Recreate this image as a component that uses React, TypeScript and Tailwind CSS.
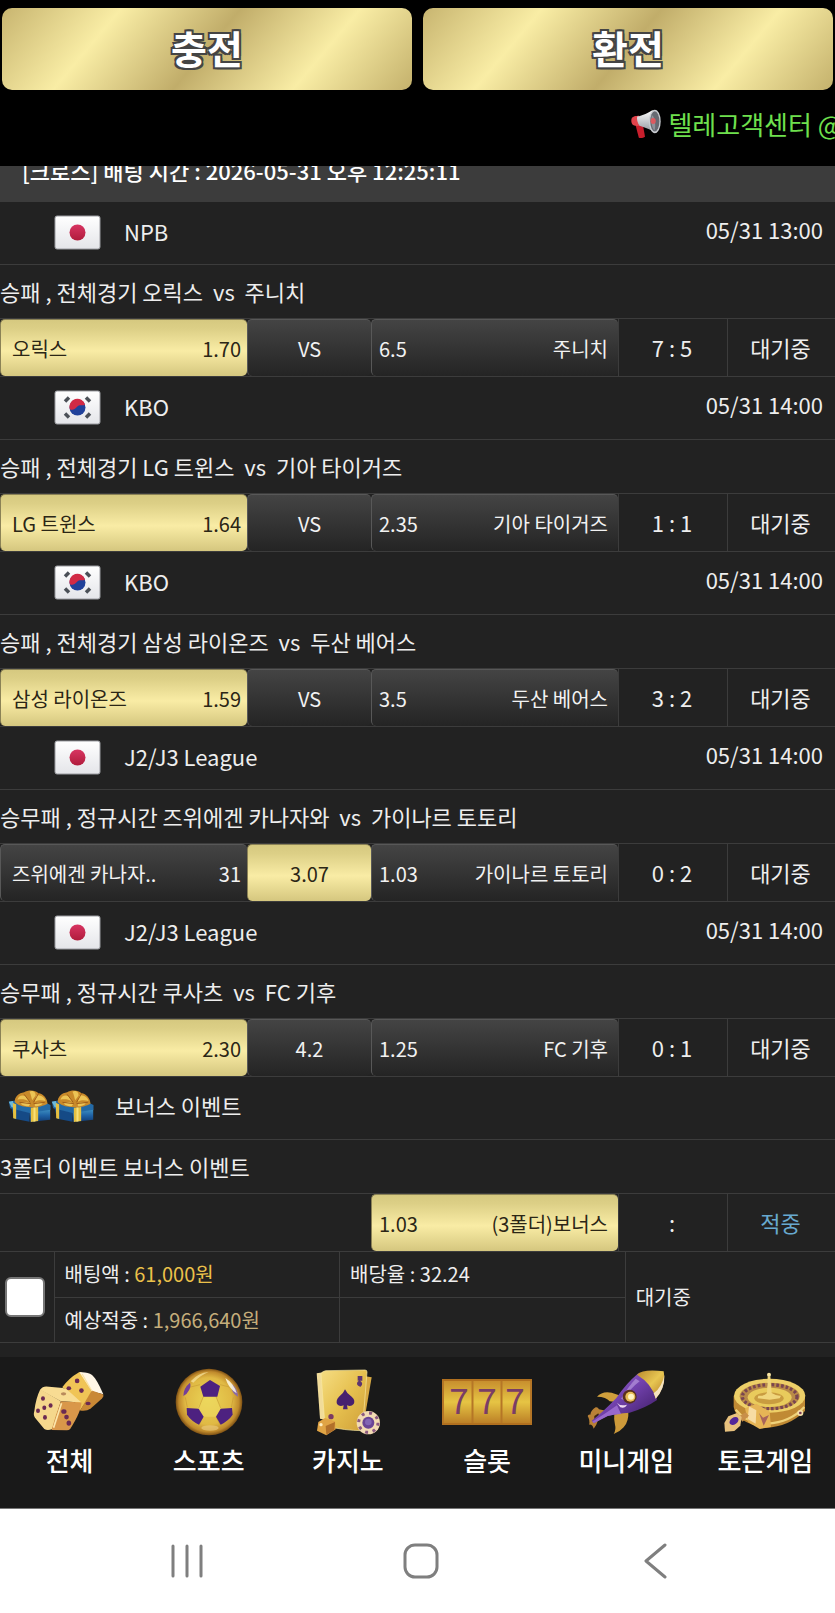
import type { ReactNode } from "react";

type Pick = "home" | "draw" | "away";

interface Match {
  country: "jp" | "kr";
  league: string;
  time: string;
  title: string;
  home: string;
  homeOdds: string;
  draw: string;
  away: string;
  awayOdds: string;
  score: string;
  pick: Pick;
}

const MATCHES: Match[] = [
  {
    country: "jp",
    league: "NPB",
    time: "05/31 13:00",
    title: "승패 , 전체경기 오릭스  vs  주니치",
    home: "오릭스",
    homeOdds: "1.70",
    draw: "VS",
    away: "주니치",
    awayOdds: "6.5",
    score: "7 : 5",
    pick: "home",
  },
  {
    country: "kr",
    league: "KBO",
    time: "05/31 14:00",
    title: "승패 , 전체경기 LG 트윈스  vs  기아 타이거즈",
    home: "LG 트윈스",
    homeOdds: "1.64",
    draw: "VS",
    away: "기아 타이거즈",
    awayOdds: "2.35",
    score: "1 : 1",
    pick: "home",
  },
  {
    country: "kr",
    league: "KBO",
    time: "05/31 14:00",
    title: "승패 , 전체경기 삼성 라이온즈  vs  두산 베어스",
    home: "삼성 라이온즈",
    homeOdds: "1.59",
    draw: "VS",
    away: "두산 베어스",
    awayOdds: "3.5",
    score: "3 : 2",
    pick: "home",
  },
  {
    country: "jp",
    league: "J2/J3 League",
    time: "05/31 14:00",
    title: "승무패 , 정규시간 즈위에겐 카나자와  vs  가이나르 토토리",
    home: "즈위에겐 카나자..",
    homeOdds: "31",
    draw: "3.07",
    away: "가이나르 토토리",
    awayOdds: "1.03",
    score: "0 : 2",
    pick: "draw",
  },
  {
    country: "jp",
    league: "J2/J3 League",
    time: "05/31 14:00",
    title: "승무패 , 정규시간 쿠사츠  vs  FC 기후",
    home: "쿠사츠",
    homeOdds: "2.30",
    draw: "4.2",
    away: "FC 기후",
    awayOdds: "1.25",
    score: "0 : 1",
    pick: "home",
  },
];

const NAV = [
  { label: "전체", icon: <DiceIcon /> },
  { label: "스포츠", icon: <BallIcon /> },
  { label: "카지노", icon: <CardsIcon /> },
  { label: "슬롯", icon: <SlotIcon /> },
  { label: "미니게임", icon: <RocketIcon /> },
  { label: "토큰게임", icon: <RouletteIcon /> },
];

export default function App() {
  return (
    <div className="w-full overflow-hidden bg-[#222222] text-[22px] leading-8 text-[#eeeeee] font-['Noto_Sans_CJK_KR','Noto_Sans',sans-serif]">
      <SvgDefs />
      <header className="bg-black pt-2">
        <div className="flex gap-[11px] px-0.5">
          <GoldButton>충전</GoldButton>
          <GoldButton>환전</GoldButton>
        </div>
        <div className="flex h-[76px] items-center gap-1.5 overflow-hidden pb-2 pl-[75.5%] text-[26px] whitespace-nowrap text-[#6fe04e]">
          <MegaphoneIcon />
          <span>텔레고객센터 @</span>
        </div>
      </header>

      <main>
        {/* slip header, partly scrolled under the top bar */}
        <div className="flex h-9 items-end overflow-hidden bg-[#3c3c3c] px-[22px] pb-4 font-medium whitespace-nowrap text-white">
          [크로스] 배팅 시간 : 2026-05-31 오후 12:25:11
        </div>

        {MATCHES.map((match, i) => (
          <MatchRow key={i} match={match} />
        ))}

        <section>
          <div className="flex h-[63px] items-center border-b border-[#3c3c3c] px-2 pb-1">
            <div className="flex">
              <GiftIcon />
              <GiftIcon />
            </div>
            <span className="ml-[21px] pb-0.5">보너스 이벤트</span>
          </div>
          <TitleRow>3폴더 이벤트 보너스 이벤트</TitleRow>
          <OddsGrid>
            <span />
            <span />
            <OddsCell active>
              <span>1.03</span>
              <span>(3폴더)보너스</span>
            </OddsCell>
            <InfoCell>:</InfoCell>
            <InfoCell>
              <span className="text-[#68a9cf]">적중</span>
            </InfoCell>
          </OddsGrid>
        </section>

        <Totals />
      </main>

      <nav className="mt-3.5 grid h-[151px] grid-cols-6 bg-[#191919] pt-[11px]">
        {NAV.map((item) => (
          <a key={item.label} href="#" className="flex flex-col items-center text-[26px] font-medium text-white">
            <span className="flex h-[68px] items-center">{item.icon}</span>
            <span className="mt-1.5 leading-9 whitespace-nowrap">{item.label}</span>
          </a>
        ))}
      </nav>

      <SystemBar />
    </div>
  );
}

function GoldButton({ children }: { children: ReactNode }) {
  return (
    <button
      type="button"
      className="h-[82px] flex-1 rounded-[10px] bg-[linear-gradient(130deg,#c8b570_0%,#f9eda5_25%,#c1ad6a_50%,#f9eda5_75%,#c4b16c_100%)] pb-1 text-[39px] font-bold text-white [text-shadow:-2px_-2px_0_#444,2px_-2px_0_#444,-2px_2px_0_#444,2px_2px_0_#444,0_2px_0_#444,0_-2px_0_#444]"
    >
      {children}
    </button>
  );
}

function MatchRow({ match }: { match: Match }) {
  return (
    <section>
      <div className="flex h-[63px] items-center border-b border-[#3c3c3c] pr-3 pb-0.5 pl-[54px]">
        <Flag country={match.country} />
        <span className="ml-[23px] flex-1 pb-0.5">{match.league}</span>
        <time className="pb-1.5">{match.time}</time>
      </div>
      <TitleRow>{match.title}</TitleRow>
      <OddsGrid>
        <OddsCell active={match.pick === "home"} home>
          <span>{match.home}</span>
          <span>{match.homeOdds}</span>
        </OddsCell>
        <OddsCell active={match.pick === "draw"} centered>
          <span>{match.draw}</span>
        </OddsCell>
        <OddsCell active={match.pick === "away"}>
          <span>{match.awayOdds}</span>
          <span>{match.away}</span>
        </OddsCell>
        <InfoCell>{match.score}</InfoCell>
        <InfoCell>대기중</InfoCell>
      </OddsGrid>
    </section>
  );
}

function TitleRow({ children }: { children: ReactNode }) {
  return (
    <div className="flex h-[54px] items-center overflow-hidden border-b border-[#3c3c3c] pb-0.5 whitespace-pre">
      {children}
    </div>
  );
}

function OddsGrid({ children }: { children: ReactNode }) {
  return (
    <div className="grid h-[58px] grid-cols-[247fr_124fr_247fr_109fr_108fr] border-b border-[#3c3c3c]">
      {children}
    </div>
  );
}

function OddsCell({
  active = false,
  home = false,
  centered = false,
  children,
}: {
  active?: boolean;
  home?: boolean;
  centered?: boolean;
  children: ReactNode;
}) {
  const tone = active
    ? "border-[#8b8256] bg-[linear-gradient(180deg,#d6c980_0%,#dccf86_15%,#f9eca5_55%,#d5c77f_100%)] text-[#2b2616]"
    : "border-[#585858] bg-[linear-gradient(180deg,#444444_0%,#242424_100%)] text-[#f2f2f2]";
  const place = centered ? "justify-center" : "justify-between";
  const pad = home ? "pl-[11px] pr-1.5" : centered ? "" : "pl-[7px] pr-2.5";

  return (
    <div
      className={`flex items-center overflow-hidden rounded-[5px] border-t border-l pt-0.5 text-[20px] whitespace-nowrap ${tone} ${place} ${pad}`}
    >
      {children}
    </div>
  );
}

function InfoCell({ children }: { children: ReactNode }) {
  return (
    <div className="flex items-center justify-center border-l border-[#3c3c3c] pr-0.5 pb-0.5 whitespace-nowrap">
      {children}
    </div>
  );
}

function Totals() {
  return (
    <table className="w-full table-fixed border-collapse text-left text-[20px] whitespace-nowrap">
      <colgroup>
        <col className="w-[54px]" />
        <col className="w-[34.2%]" />
        <col className="w-[34.2%]" />
        <col />
      </colgroup>
      <tbody>
        <tr className="h-[45px]">
          <td rowSpan={2} className="border-r border-b border-[#3c3c3c] pl-[5px]">
            <input
              type="checkbox"
              aria-label="배팅 선택"
              className="block size-10 appearance-none rounded-md border-2 border-[#767676] bg-white"
            />
          </td>
          <td className="border-r border-b border-[#3c3c3c] px-2.5">
            배팅액 : <span className="text-[#ebc14a]">61,000원</span>
          </td>
          <td className="border-r border-b border-[#3c3c3c] px-2.5">배당율 : 32.24</td>
          <td rowSpan={2} className="border-b border-[#3c3c3c] px-2.5">
            대기중
          </td>
        </tr>
        <tr className="h-[45px]">
          <td className="border-r border-b border-[#3c3c3c] px-2.5">
            예상적중 : <span className="text-[#c5ae7b]">1,966,640원</span>
          </td>
          <td className="border-r border-b border-[#3c3c3c]" />
        </tr>
      </tbody>
    </table>
  );
}

function SystemBar() {
  return (
    <div className="grid h-[106px] grid-cols-3 items-center justify-items-center border-t border-[#777] bg-white pr-[63px] pl-[70px]">
      <button type="button" aria-label="최근 앱">
        <svg width="36" height="36" viewBox="0 0 36 36" stroke="#7f7f7f" strokeWidth="3" strokeLinecap="round">
          <path d="M4 3v30M18 3v30M32 3v30" />
        </svg>
      </button>
      <button type="button" aria-label="홈">
        <svg width="36" height="36" viewBox="0 0 36 36" fill="none" stroke="#7f7f7f" strokeWidth="3">
          <rect x="2" y="2" width="32" height="32" rx="10" />
        </svg>
      </button>
      <button type="button" aria-label="뒤로">
        <svg width="36" height="36" viewBox="0 0 36 36" fill="none" stroke="#7f7f7f" strokeWidth="3" strokeLinecap="round" strokeLinejoin="round">
          <path d="M28 2 9 18l19 16" />
        </svg>
      </button>
    </div>
  );
}

function SvgDefs() {
  return (
    <svg width="0" height="0" className="absolute" aria-hidden="true">
      <defs>
        <linearGradient id="flagBg" x1="0" y1="0" x2="0" y2="1">
          <stop offset="0" stopColor="#ffffff" />
          <stop offset="1" stopColor="#e4e5e9" />
        </linearGradient>
        <linearGradient id="redDot" x1="0" y1="0" x2="0" y2="1">
          <stop offset="0" stopColor="#d83562" />
          <stop offset="1" stopColor="#b01c3c" />
        </linearGradient>
        <linearGradient id="gold" x1="0" y1="0" x2="1" y2="1">
          <stop offset="0" stopColor="#b98a2e" />
          <stop offset="0.5" stopColor="#e8c652" />
          <stop offset="1" stopColor="#b47a25" />
        </linearGradient>
        <linearGradient id="cardFace" x1="0" y1="0" x2="1" y2="1">
          <stop offset="0" stopColor="#f5dd83" />
          <stop offset="0.5" stopColor="#e6c04f" />
          <stop offset="1" stopColor="#cf9f38" />
        </linearGradient>
        <radialGradient id="ballGold" cx="0.5" cy="0.5" r="0.5" fx="0.48" fy="0.45">
          <stop offset="0" stopColor="#e9d355" />
          <stop offset="0.7" stopColor="#e0b944" />
          <stop offset="0.9" stopColor="#c08a2c" />
          <stop offset="1" stopColor="#7c4f14" />
        </radialGradient>
        <linearGradient id="reel" x1="0" y1="0" x2="0" y2="1">
          <stop offset="0" stopColor="#c58a2c" />
          <stop offset="0.5" stopColor="#e6c444" />
          <stop offset="1" stopColor="#b87a24" />
        </linearGradient>
        <linearGradient id="purple" x1="0" y1="0" x2="1" y2="1">
          <stop offset="0" stopColor="#a77bd0" />
          <stop offset="0.45" stopColor="#7443b0" />
          <stop offset="1" stopColor="#38185c" />
        </linearGradient>
        <linearGradient id="horn" x1="0" y1="0" x2="0" y2="1">
          <stop offset="0" stopColor="#ffffff" />
          <stop offset="1" stopColor="#8f959c" />
        </linearGradient>
        <linearGradient id="giftBox" x1="0" y1="0" x2="0" y2="1">
          <stop offset="0" stopColor="#3f92c2" />
          <stop offset="0.5" stopColor="#1f62a5" />
          <stop offset="1" stopColor="#103a72" />
        </linearGradient>
      </defs>
    </svg>
  );
}

function Flag({ country }: { country: "jp" | "kr" }) {
  return (
    <svg width="47" height="35" viewBox="0 0 47 35" role="img" aria-label={country === "jp" ? "일본" : "대한민국"}>
      <rect x="1" y="1" width="45" height="33" rx="2" fill="url(#flagBg)" stroke="#9a9ba0" strokeWidth="1" />
      {country === "jp" ? (
        <circle cx="23.5" cy="17.5" r="8" fill="url(#redDot)" />
      ) : (
        <g>
          <circle cx="23.5" cy="17.5" r="8" fill="#20419a" />
          <path d="M15.7 19a8 8 0 1 1 15.4-4.500c-3 2-5.500-.5-8 2.300-2.500 3.200-5.400 3.800-7.400 2.200z" fill="#d22a45" />
          <g stroke="#4b5057" strokeWidth="3.500">
            <path d="m11 11.500 4-4M32 7.500l4 4M11 23.500l4 4M32 27.500l4-4" />
          </g>
        </g>
      )}
    </svg>
  );
}

function MegaphoneIcon() {
  return (
    <svg width="32" height="32" viewBox="638 328 98 98" aria-hidden="true" className="shrink-0">
      <path d="M655 380l22-4 7 40c-5 4-14 5-19 3z" fill="#c81e2c" />
      <path d="M643 360c2-6 14-8 23-8l6 28c-8 4-22 4-27-2-3-5-4-13-2-18z" fill="#e2434b" />
      <path d="M660 354c16-2 36-12 47-20l14 70c-16-8-36-16-54-22-6-8-9-20-7-28z" fill="url(#horn)" />
      <ellipse cx="714" cy="369" rx="18" ry="36" fill="#c9ccd1" />
      <ellipse cx="714" cy="369" rx="14" ry="31" fill="#666a72" />
      <path d="M705 350c7 0 14 30 8 47-8-6-12-32-8-47z" fill="#8d929a" />
      <ellipse cx="709" cy="368" rx="8" ry="9" fill="#dc5a60" />
    </svg>
  );
}

function GiftIcon() {
  return (
    <svg width="43" height="34" viewBox="24 120 128 102" aria-hidden="true">
      <path d="M34 178l54 12v28l-46-9z" fill="#154a86" />
      <path d="M88 188l62-8v32l-60 7z" fill="url(#giftBox)" />
      <path d="M26 158l30-6 66 2 29 14v14l-63 10-58-14z" fill="#246aa6" />
      <path d="M26 158l12-2 6 22-10-4z" fill="#6db9da" />
      <path d="M92 176l22-2v42l-22 3zM38 162l10 4v44l-9-2z" fill="#e6c040" />
      <path d="M100 174l6-1v44l-6 1z" fill="#f6e07a" />
      <path d="M44 160c-2-16 12-28 28-30 10-8 34-8 42 2 16 2 28 18 28 32-14 8-40 14-58 10-16 0-32-6-40-14z" fill="#c98a2a" />
      <path d="M52 152c2-12 16-16 24-10l12 16c-12-8-26-8-36-6zM88 128c10-6 20 2 18 12l-10 14c-2-8-4-18-8-26zM108 140c12-4 26 6 28 16-10-2-20-4-32 2zM62 164c10-8 20-6 28 0l-4 8c-8 0-18-2-24-8zM104 164c8-6 18-4 24 0-8 6-16 8-24 8z" fill="#ecc455" />
      <path d="M72 136l18 24M116 132l-16 28M58 160l34 4M134 160l-34 4" stroke="#a2601a" strokeWidth="3" />
    </svg>
  );
}

function DiceIcon() {
  return (
    <svg width="73" height="63" viewBox="98 60 220 190" aria-hidden="true">
      <path d="M186 112q24-30 46-42 8-6 14-2l30 60-36 54-36-58z" fill="#f0c456" />
      <path d="M238 67q24-2 38 8 14 12 34 58l-34-8z" fill="#fff6e6" />
      <path d="M275 122l35 12q2 6-4 12l-34 30q-14 10-32 6z" fill="#c98835" />
      <path d="M246 72l30 52" stroke="#fbe3a4" strokeWidth="4" />
      <path d="M120 120q6-10 18-10l50 4q10 2 16 8l40 36-62-4z" fill="#f8dc93" />
      <path d="M120 118l62 36-26 84q-14 6-24 0l-28-34q-6-8-2-20 4-38 18-66z" fill="#f5d78c" />
      <path d="M182 154l62 4q0 26-34 80-4 4-10 4l-46-1q12-46 28-87z" fill="#d9974a" />
      <path d="M184 160l-24 74" stroke="#fbe7ad" strokeWidth="5" />
      <g fill="#6b2a52">
        <ellipse cx="128" cy="146" rx="6" ry="7" />
        <ellipse cx="151" cy="167" rx="6" ry="7" />
        <ellipse cx="132" cy="174" rx="6" ry="7" />
        <ellipse cx="113" cy="183" rx="6" ry="7" />
        <ellipse cx="134" cy="203" rx="6" ry="7" />
        <ellipse cx="191" cy="185" rx="8" ry="7" />
        <ellipse cx="199" cy="202" rx="7" ry="7" />
        <ellipse cx="206" cy="220" rx="7" ry="8" />
        <ellipse cx="231" cy="93" rx="7" ry="7" />
        <ellipse cx="206" cy="115" rx="7" ry="6" />
        <ellipse cx="244" cy="122" rx="7" ry="7" />
        <ellipse cx="264" cy="161" rx="8" ry="5" />
      </g>
      <ellipse cx="190" cy="132" rx="8" ry="5" fill="#b98a5c" />
    </svg>
  );
}

function BallIcon() {
  return (
    <svg width="68" height="68" viewBox="523 54 204 204" aria-hidden="true">
      <circle cx="625" cy="156" r="100" fill="url(#ballGold)" />
      <path d="M608 142h38l16 32-16 26h-40l-16-26z" fill="#efdb62" opacity="0.6" />
      <path d="M608 140l-14 34M646 140l14 34M606 200l-10 24M646 200l12 24M566 112l32-8M658 104l32 8M554 142l6 30M698 142l-6 30" stroke="#c99d35" strokeWidth="2" fill="none" />
      <path d="M628 90l30 18-8 32h-42l-9-30z" fill="#4d2180" />
      <path d="M558 174l36 2 15 24-14 24q-22-10-36-30z" fill="#4d2180" />
      <path d="M694 174l-34 2-14 24 14 24q24-12 36-30z" fill="#4d2180" />
      <path d="M568 98q4 12-4 24-6 12-16 16 0-24 20-40z" fill="#744099" />
      <path d="M694 102q18 16 18 38-14-8-18-20z" fill="#8a6aa8" />
      <path d="M674 84q26 16 34 46-24-14-34-46z" fill="#fffbe6" opacity="0.85" />
      <path d="M570 94q22-26 54-28-26 10-46 32z" fill="#fff3b4" opacity="0.6" />
      <ellipse cx="628" cy="234" rx="26" ry="8" fill="#e9c777" opacity="0.7" />
    </svg>
  );
}

function CardsIcon() {
  return (
    <svg width="66" height="68" viewBox="948 56 198 204" aria-hidden="true">
      <path d="M953 72l40-6 8 150-38-8z" fill="#f1dc9a" />
      <path d="M1080 78l38 6-24 140-34-8z" fill="#d7a943" />
      <path d="M980 64l118-2q6 0 6 6l-14 176q-50 0-112-14l-12-156q2-8 14-10z" fill="url(#cardFace)" stroke="#f9e8a0" strokeWidth="2" />
      <path d="M1038 120q6 14 20 22 12 10 6 22-8 10-20 4l2 12h-14l2-12q-12 6-20-4-4-12 6-22 14-10 18-22z" fill="#47206f" />
      <path d="M1078 82h10v10h-10zM1082 96q10 6 2 14-12-4-6-12z" stroke="#5d3570" strokeWidth="4" fill="#5d3570" />
      <circle cx="996" cy="202" r="8" fill="#7b3a63" />
      <path d="M958 218l20-12 30 10 2 24-28 18-28-14z" fill="#e0a445" />
      <path d="M980 230l28-12-2 24-24 14z" fill="#b1702a" />
      <circle cx="966" cy="226" r="5" fill="#fff0c4" />
      <circle cx="1108" cy="220" r="35" fill="#f3dcb4" />
      <circle cx="1108" cy="220" r="29" fill="none" stroke="#8c5a80" strokeWidth="9" strokeDasharray="9 14" />
      <circle cx="1108" cy="220" r="18" fill="#6a4596" />
      <circle cx="1108" cy="218" r="10" fill="#8265b4" />
    </svg>
  );
}

function SlotIcon() {
  return (
    <svg width="90" height="46" viewBox="0 0 90 46" aria-hidden="true">
      <rect width="90" height="46" fill="url(#reel)" />
      <path d="M1 0v46M30.500 0v46M59.500 0v46M89 0v46" stroke="#b57626" strokeWidth="2" />
      <path d="M0 1h90M0 45h90" stroke="#b1701f" strokeWidth="2" />
      <g fill="#7a3d66" fontFamily="Noto Sans CJK KR, sans-serif" fontSize="35" fontWeight="400" textAnchor="middle">
        <text x="17" y="35">7</text>
        <text x="45" y="35">7</text>
        <text x="73" y="35">7</text>
      </g>
    </svg>
  );
}

function RocketIcon() {
  return (
    <svg width="80" height="66" viewBox="507 55 240 198" aria-hidden="true">
      <path d="M604 158q-12-6-26-6-10-14-38-14 16-18 44-12 20 6 36 14z" fill="#cf9f3c" />
      <path d="M592 186l42-6q2 32-14 50-12 14-30 20 8-14 4-28-4-18-2-36z" fill="#cd9a3a" />
      <path d="M512 196q2-6 8-4 2-14 16-22 6-2 10 6l20 4q-4 20-24 32-4 14-12 22-4-14-14-12 4-12-4-26z" fill="#b98136" />
      <path d="M532 196l12-8 4 12-16 16z" fill="#3b2614" />
      <path d="M664 68q24 6 40 30 14 22 16 50-34 24-82 38-40 2-66 10l-42 22-6-8q30-22 74-68 30-44 66-74z" fill="url(#purple)" />
      <path d="M600 164q-30 22-70 46l-4 2 4 6 42-22q16-4 40-6z" fill="#9868cc" />
      <path d="M660 72q18-18 80-10 8 46-24 82-10-44-56-72z" fill="url(#gold)" />
      <path d="M742 72q2 42-26 72-2-8-6-16 26-20 32-56z" fill="#f6e3c0" />
      <path d="M612 144q22-36 44-60l12 8q-30 22-48 56z" fill="#c0a2e4" opacity="0.6" />
      <circle cx="638" cy="138" r="21" fill="#59301f" />
      <circle cx="640" cy="138" r="15" fill="#e8bd55" />
      <circle cx="642" cy="138" r="9" fill="#fff3c4" />
      <path d="M600 156q10 12 30 6-6 12-20 8z" fill="#eed9f0" />
    </svg>
  );
}

function RouletteIcon() {
  return (
    <svg width="84" height="62" viewBox="918 64 252 186" aria-hidden="true">
      <path d="M950 138v34q10 50 98 62 66-2 116-50v-48z" fill="#c08a34" />
      <path d="M956 180q30 40 94 42 70-4 112-50" fill="none" stroke="#efd27a" strokeWidth="7" />
      <ellipse cx="1058" cy="138" rx="107" ry="51" fill="#edcf68" />
      <ellipse cx="1058" cy="140" rx="90" ry="41" fill="#b98a48" />
      <ellipse cx="1058" cy="141" rx="82" ry="36" fill="none" stroke="#7a4550" strokeWidth="10" strokeDasharray="8 6" />
      <ellipse cx="1058" cy="143" rx="66" ry="29" fill="#e9cb5c" />
      <ellipse cx="1056" cy="146" rx="44" ry="18" fill="#c99c40" />
      <path d="M1052 80h8l4 50q16 10 28 8l-4 8-30 4-36-4 2-8q18 2 26-8z" fill="#f0d67c" />
      <circle cx="1056" cy="75" r="6" fill="#f9e5a2" />
      <path d="M984 176l34-14 40 24 4 46-34 6-34-20z" fill="#e6b556" />
      <path d="M996 170l22 12-2 40-24-14z" fill="#f7dca4" />
      <path d="M1026 190l12 14 18-8-16 32z" fill="#a8645a" />
      <path d="M966 200l20-12 10 10-20 18z" fill="#c88f4a" />
      <path d="M922 220l12-20 26-10 14 12-4 26-18 16-28 2z" fill="#e8c27e" />
      <ellipse cx="951" cy="214" rx="15" ry="10" transform="rotate(-35 951 214)" fill="#53279a" />
      <circle cx="1150" cy="190" r="9" fill="#f3dfa8" />
      <circle cx="1150" cy="190" r="4" fill="#7d3c57" />
    </svg>
  );
}
